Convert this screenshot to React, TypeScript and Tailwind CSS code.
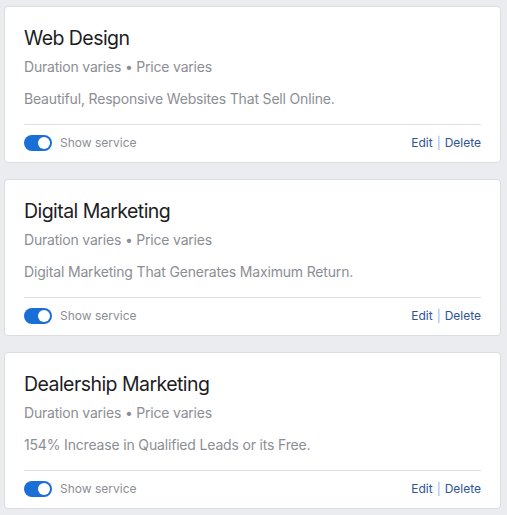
import React from "react"

const services = [
  {
    title: "Web Design",
    meta: "Duration varies • Price varies",
    description: "Beautiful, Responsive Websites That Sell Online.",
  },
  {
    title: "Digital Marketing",
    meta: "Duration varies • Price varies",
    description: "Digital Marketing That Generates Maximum Return.",
  },
  {
    title: "Dealership Marketing",
    meta: "Duration varies • Price varies",
    description: "154% Increase in Qualified Leads or its Free.",
  },
]

function Toggle() {
  return (
    <div className="flex h-4 w-7 items-center justify-end rounded-full bg-[#1a6fd6] px-[2px]">
      <div className="h-3 w-3 rounded-full bg-white" />
    </div>
  )
}

function ServiceCard({ title, meta, description }: { title: string; meta: string; description: string }) {
  return (
    <div className="w-[497px] rounded-[4px] border border-[#dcdde1] bg-white px-[19px] pb-[11px] pt-[19px]">
      <h3 className="text-[19.5px] leading-[24px] tracking-[-0.55px] text-[#1d1d1f]">{title}</h3>
      <p className="mt-[7px] text-[14px] leading-[20px] tracking-[-0.2px] text-[#8b8e94]">{meta}</p>
      <p className="mt-[12px] text-[14px] leading-[20px] tracking-[-0.17px] text-[#8b8e94]">{description}</p>
      <div className="mt-[15px] h-px w-full bg-[#dedfe2]" />
      <div className="mt-[10px] flex h-4 items-center justify-between">
        <div className="flex items-center gap-2">
          <Toggle />
          <span className="text-[12px] leading-4 text-[#8b8e94]">Show service</span>
        </div>
        <div className="flex items-center text-[12px] leading-4 text-[#2c5496]">
          <span>Edit</span>
          <span className="mx-[4px] text-[#8db4ea]">|</span>
          <span>Delete</span>
        </div>
      </div>
    </div>
  )
}

export default function App() {
  return (
    <div
      className="flex min-h-[515px] flex-col gap-4 bg-[#ebecf0] pl-[4px] pt-[6px]"
      style={{ fontFamily: "Inter, 'Noto Sans', sans-serif" }}
    >
      {services.map((s, i) => (
        <ServiceCard key={i} {...s} />
      ))}
    </div>
  )
}
